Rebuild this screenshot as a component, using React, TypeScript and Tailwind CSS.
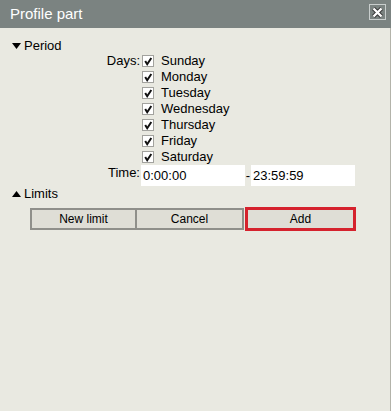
const days = ['Sunday', 'Monday', 'Tuesday', 'Wednesday', 'Thursday', 'Friday', 'Saturday'];

const Check = () => (
  <span className="flex h-[12px] w-[12px] items-center justify-center border border-[#a2a29e] bg-white">
    <svg width="10" height="10" viewBox="0 0 10 10">
      <path d="M2.2 5 L4.2 8.2 L8.3 2" fill="none" stroke="#111" strokeWidth="2" />
    </svg>
  </span>
);

const Arrow = ({ up }: { up?: boolean }) => (
  <svg width="9" height="6" viewBox="0 0 9 6" className="mr-[3px]">
    <polygon points={up ? '0,6 9,6 4.5,0' : '0,0 9,0 4.5,6'} fill="#000" />
  </svg>
);

export default function App() {
  return (
    <div className="flex h-[411px] w-[391px] flex-col bg-[#e9e9e1] font-['Liberation_Sans',Arial,sans-serif] text-[12px] text-black">
      {/* Title bar */}
      <div className="flex h-[28px] items-start justify-between bg-[#7b8381] pl-[10px] pr-[5px]">
        <span className="mt-[5px] text-[15px] leading-[18px] text-white">Profile part</span>
        <button className="mt-[4px] flex h-[16px] w-[17px] items-center justify-center border border-[#c9cecd]">
          <svg width="13" height="13" viewBox="0 0 13 13">
            <path d="M2.5 2.5 L10.5 10.5 M10.5 2.5 L2.5 10.5" stroke="#333" strokeWidth="4.2" />
            <path d="M2.5 2.5 L10.5 10.5 M10.5 2.5 L2.5 10.5" stroke="#fff" strokeWidth="2.4" />
          </svg>
        </button>
      </div>

      {/* Body */}
      <div className="flex-1 border-r border-[#b3b3aa] pt-[10px]">
        <div className="flex h-[15px] items-center pl-[12px] text-[13px]">
          <Arrow />
          Period
        </div>

        {days.map((d, i) => (
          <div key={d} className="flex h-[16px] items-center">
            <span className="w-[140px] text-right text-[13px]">{i === 0 ? 'Days:' : ''}</span>
            <span className="ml-[2px]">
              <Check />
            </span>
            <span className="ml-[7px] text-[13px]">{d}</span>
          </div>
        ))}

        <div className="flex items-start">
          <span className="w-[140px] text-right text-[13px] leading-[16px]">Time:</span>
          <input
            readOnly
            value="0:00:00"
            className="ml-[1px] h-[21px] w-[104px] bg-white pl-[2px] text-[13px] outline-none"
          />
          <span className="flex h-[21px] w-[6px] items-center justify-center text-[13px]">-</span>
          <input
            readOnly
            value="23:59:59"
            className="h-[21px] w-[104px] bg-white pl-[2px] text-[13px] outline-none"
          />
        </div>

        <div className="flex h-[16px] items-center pl-[12px] text-[13px]">
          <Arrow up />
          Limits
        </div>

        <div className="ml-[30px] mt-[5px] flex items-center">
          <button className="h-[22px] w-[107px] border-2 border-[#8f8f8a] bg-[#dfded6] text-[12px]">New limit</button>
          <button className="h-[22px] w-[107px] border-y-2 border-r-2 border-[#8f8f8a] bg-[#dfded6] text-[12px]">Cancel</button>
          <button className="ml-[1px] h-[24px] w-[111px] border-[3px] border-[#d5222d] bg-[#dfded6] text-[12px]">Add</button>
        </div>
      </div>
    </div>
  );
}
